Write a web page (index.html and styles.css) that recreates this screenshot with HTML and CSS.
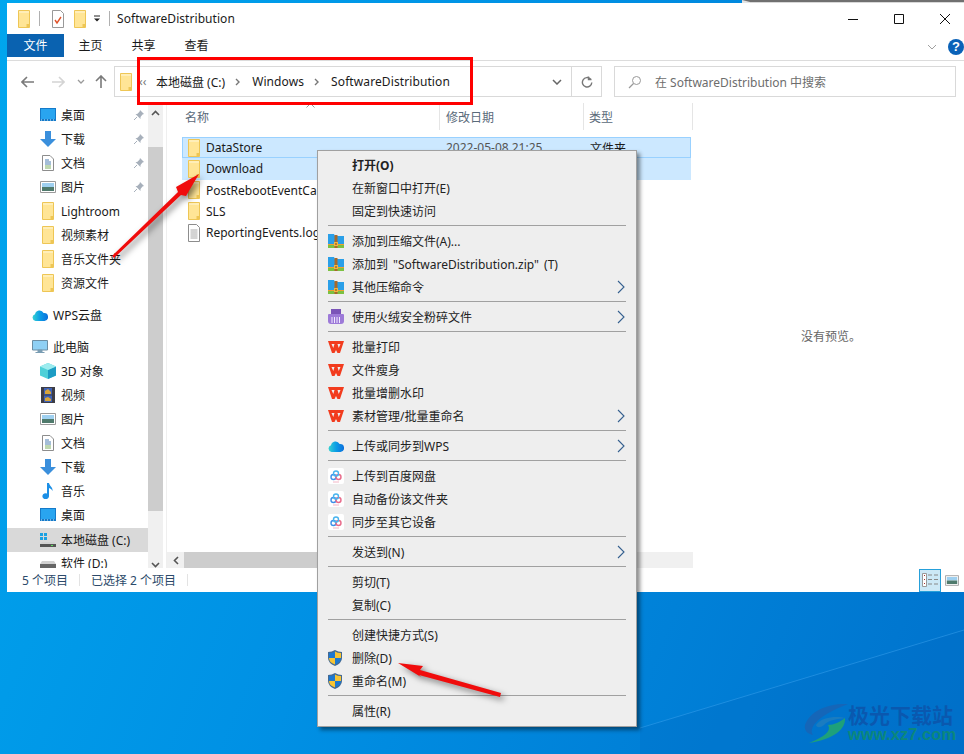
FILE: index.html
```html
<!DOCTYPE html>
<html lang="zh-CN">

<head>
    <meta charset="UTF-8">
    <title>SoftwareDistribution</title>
    <link rel="stylesheet" href="styles.css">
</head>

<body>
    <svg class="defs" width="0" height="0">
        <symbol id="folder" viewBox="0 0 14 18">
            <path d="M1.500 .5H12.500V17.500H1.500Z" fill="#ffe596" stroke="#eec655"/>
            <path d="M9.500 17V14H12V17Z" fill="#eec655"/>
            <path d="M2 1H12V3H2Z" fill="#ffeeb8"/>
        </symbol>
        <symbol id="pin" viewBox="0 0 12 12">
            <path d="M7 1L11 5L9.500 5.500L7.500 8V10L2.500 5H4.200L6.500 2.800Z" fill="#a7b0bb"/>
            <path d="M4 8L1 11" stroke="#a7b0bb"/>
        </symbol>
        <symbol id="desk" viewBox="0 0 16 14">
            <path d="M0 0H16V13H0Z" fill="#157ac9"/>
            <path d="M1 1H15V11H1Z" fill="#29a5f0"/>
            <path d="M1 12H15" stroke="#d6ecfa" stroke-dasharray="1 2"/>
        </symbol>
        <symbol id="down" viewBox="0 0 16 16">
            <path d="M5 0H11V8H16L8 16L0 8H5Z" fill="#3a8fdc"/>
        </symbol>
        <symbol id="doc" viewBox="0 0 12 16">
            <path d="M.5 .5H8L11.500 4V15.500H.5Z" fill="#fff" stroke="#8d8d8d"/>
            <path d="M3 5H7M3 7H9M3 9H9" stroke="#4a7db0"/>
            <path d="M3 11H9M3 13H9" stroke="#7fb061"/>
        </symbol>
        <symbol id="pic" viewBox="0 0 16 12">
            <path d="M.5 .5H15.500V11.500H.5Z" fill="#fff" stroke="#9a9a9a"/>
            <path d="M2 2H14V6H2Z" fill="#9fd0f0"/>
            <path d="M2 6H14V10H2Z" fill="#4f7a6c"/>
        </symbol>
        <symbol id="cloud" viewBox="0 0 16 12">
            <defs>
                <linearGradient id="cloudfill" x1="0" x2="1" y1="0" y2="0">
                    <stop offset="0" stop-color="#35d2d2"/>
                    <stop offset=".5" stop-color="#0a9be6"/>
                    <stop offset="1" stop-color="#0c6fdc"/>
                </linearGradient>
            </defs>
            <path d="M3.500 12A3.500 3.500 0 0 1 3 5.200A4.600 4.600 0 0 1 11.600 4A4 4 0 0 1 12.500 12Z" fill="url(#cloudfill)"/>
        </symbol>
        <symbol id="pc" viewBox="0 0 16 14">
            <path d="M.5 .5H15.500V10H.5Z" fill="#8fd0f4" stroke="#6d8ea3"/>
            <path d="M6 10H10V12H6ZM3.500 12.500H12.500" fill="#7a9db3" stroke="#7a9db3"/>
        </symbol>
        <symbol id="cube" viewBox="0 0 16 16">
            <path d="M8 0L16 3.500V12.500L8 16L0 12.500V3.500Z" fill="#4fd0d8"/>
            <path d="M8 7L16 3.500V12.500L8 16Z" fill="#1c9cc4"/>
            <path d="M8 0L16 3.500L8 7L0 3.500Z" fill="#9decef"/>
        </symbol>
        <symbol id="film" viewBox="0 0 14 16">
            <path d="M0 0H14V16H0Z" fill="#3d3d46"/>
            <path d="M3 1H11V7.500H3Z" fill="#3f62b8"/>
            <path d="M3 8.500H11V15H3Z" fill="#3f62b8"/>
            <path d="M4 4L7 2L10 5V7H4ZM4 11L7 10L10 12V14H4Z" fill="#d9a53a"/>
        </symbol>
        <symbol id="note" viewBox="0 0 12 16">
            <path d="M5 0H7C7.500 3 11 4 10.500 8C9.500 6 8.500 5.500 7 5V13A3.300 3 0 1 1 5 10.500Z" fill="#1c8fe6"/>
        </symbol>
        <symbol id="drivec" viewBox="0 0 16 14">
            <path d="M0 0H3V3H0ZM4 0H7V3H4ZM0 4H3V7H0ZM4 4H7V7H4Z" fill="#1ba1e2"/>
            <path d="M2 9H14L16 11H0Z" fill="#d2d2d2"/>
            <path d="M0 11H16V14H0Z" fill="#555"/>
            <path d="M11 12H13V13H11Z" fill="#5fe05f"/>
        </symbol>
        <symbol id="drive" viewBox="0 0 16 14">
            <path d="M2 5H14L16 8H0Z" fill="#d2d2d2"/>
            <path d="M0 8H16V12H0Z" fill="#666"/>
        </symbol>
        <symbol id="zip" viewBox="0 0 16 16">
            <path d="M0 1H6L7 3H16V12H0Z" fill="#2a9fe8"/>
            <path d="M0 11H16V12H0Z" fill="#f0a030"/>
            <path d="M0 12H16V15H0Z" fill="#7cc142"/>
            <path d="M6.500 2H9.500V15H6.500Z" fill="#a8692a"/>
            <path d="M6 9H10V13H6Z" fill="#f2b544"/>
            <path d="M7.500 10H8.500V12H7.500Z" fill="#7a4a10"/>
        </symbol>
        <symbol id="shred" viewBox="0 0 16 16">
            <path d="M3 0H13V5H3Z" fill="#7a54b8"/>
            <path d="M1 5H15Q16 5 16 6V12Q16 15 13 15H3Q0 15 0 12V6Q0 5 1 5Z" fill="#9d7ad8"/>
            <path d="M4 8V14M6.500 8V14M9 8V14M11.500 8V14" stroke="#f0eaff"/>
        </symbol>
        <symbol id="wps" viewBox="0 0 16 12">
            <path d="M0 0H16L12 12H9.500L8 9L6.500 12H4Z" fill="#f23c1e"/>
            <path d="M3.500 3H6.500L5.300 7ZM9.500 3H12.500L10.700 7Z" fill="#eee"/>
        </symbol>
        <symbol id="baidu" viewBox="0 0 16 16">
            <path d="M2 0H14Q16 0 16 2V14Q16 16 14 16H2Q0 16 0 14V2Q0 0 2 0Z" fill="#fff"/>
            <circle cx="5.500" cy="9" r="2.500" fill="none" stroke="#3d8fe8" stroke-width="1.400"/>
            <circle cx="10.500" cy="9" r="2.500" fill="none" stroke="#e86a8a" stroke-width="1.400"/>
            <circle cx="8" cy="5.500" r="2.500" fill="none" stroke="#49b4ee" stroke-width="1.400"/>
            <path d="M5 14H11" stroke="#f2b6c6"/>
        </symbol>
        <symbol id="shield" viewBox="0 0 14 16">
            <path d="M7 0Q10 2 14 2V8Q14 13 7 16Q0 13 0 8V2Q4 2 7 0Z" fill="#456a92"/>
            <path d="M7 1.500V8H1V3Q4.500 3 7 1.500ZM7 8H13Q13 12.500 7 14.500Z" fill="#1c78d0"/>
            <path d="M7 1.500Q9.500 3 13 3V8H7ZM7 8V14.500Q1 12.500 1 8Z" fill="#f7c433"/>
        </symbol>
        <symbol id="more" viewBox="0 0 8 14">
            <path d="M1 1L7 7L1 13" fill="none" stroke="#35608f" stroke-width="1.100"/>
        </symbol>
        <symbol id="crumb" viewBox="0 0 6 8">
            <path d="M1 1L4 4L1 7" fill="none" stroke="#777" stroke-width="1.400"/>
        </symbol>
    </svg>

    <!-- wallpaper -->
    <svg class="wall" width="964" height="754">
        <path d="M640 728L964 630V754H640Z" fill="#0068c0" opacity=".25"/>
        <path d="M640 728L964 630" stroke="#3aa4f0" opacity=".5" fill="none"/>
    </svg>
    <div class="backwin"></div>

    <div class="window">
        <header class="titlebar">
            <svg width="14" height="18"><use href="#folder"/></svg>
            <span class="tsep"></span>
            <svg class="qdoc" width="14" height="18" viewBox="0 0 14 18">
                <path d="M1.500 .5H9.500L12.500 3.500V17.500H1.500Z" fill="#fff" stroke="#999"/>
                <path d="M4 10L6 13L10 7" fill="none" stroke="#e0532a" stroke-width="1.400"/>
            </svg>
            <svg class="qfold" width="14" height="18"><use href="#folder"/></svg>
            <svg class="qdrop" width="8" height="8" viewBox="0 0 8 8">
                <path d="M1 1H7" stroke="#222"/>
                <path d="M1 3.500H7L4 6.500Z" fill="#222"/>
            </svg>
            <span class="tsep"></span>
            <span class="title">SoftwareDistribution</span>
            <div class="winctl">
                <svg width="12" height="12" viewBox="0 0 12 12"><path d="M1 6.500H11" stroke="#111"/></svg>
                <svg width="12" height="12" viewBox="0 0 12 12"><path d="M1.500 1.500H10.500V10.500H1.500Z" fill="none" stroke="#111"/></svg>
                <svg width="12" height="12" viewBox="0 0 12 12"><path d="M1 1L11 11M11 1L1 11" stroke="#111"/></svg>
            </div>
        </header>

        <div class="ribbon">
            <span class="tab file">文件</span>
            <span class="tab">主页</span>
            <span class="tab">共享</span>
            <span class="tab">查看</span>
            <svg class="ribchev" width="10" height="6" viewBox="0 0 10 6"><path d="M1 1L5 5L9 1" fill="none" stroke="#a0a0a0"/></svg>
            <span class="help">?</span>
        </div>

        <div class="addrrow">
            <div class="navbtns">
                <svg class="nback" width="14" height="12" viewBox="0 0 14 12"><path d="M6 1L1 6L6 11M1 6H13" fill="none" stroke="#7a7a7a" stroke-width="1.600"/></svg>
                <svg class="nfwd" width="14" height="12" viewBox="0 0 14 12"><path d="M8 1L13 6L8 11M13 6H1" fill="none" stroke="#d4d4d4" stroke-width="1.600"/></svg>
                <svg class="nchev" width="8" height="6" viewBox="0 0 8 6"><path d="M1 1L4 4L7 1" fill="none" stroke="#9a9a9a" stroke-width="1.300"/></svg>
                <svg class="nup" width="12" height="14" viewBox="0 0 12 14"><path d="M1 6L6 1L11 6M6 1V13" fill="none" stroke="#7a7a7a" stroke-width="1.600"/></svg>
            </div>
            <div class="addr">
                <svg class="addrfold" width="14" height="18"><use href="#folder"/></svg>
                <span class="dbl">‹‹</span>
                <span>本地磁盘 (C:)</span>
                <svg class="crumb" width="6" height="8"><use href="#crumb"/></svg>
                <span class="wide">Windows</span>
                <svg class="crumb" width="6" height="8"><use href="#crumb"/></svg>
                <span class="wide">SoftwareDistribution</span>
                <svg class="addrdrop" width="10" height="6" viewBox="0 0 10 6"><path d="M1 1L5 5L9 1" fill="none" stroke="#666" stroke-width="1.500"/></svg>
            </div>
            <div class="refresh">
                <svg width="12" height="12" viewBox="0 0 12 12"><path d="M9.500 3A4.700 4.700 0 1 0 10.800 6.500M7.500 .5V3.500H10.500" fill="none" stroke="#777" stroke-width="1.400"/></svg>
            </div>
            <div class="search">
                <svg width="14" height="14" viewBox="0 0 14 14"><circle cx="8.500" cy="5.500" r="4" fill="none" stroke="#999"/><path d="M5.500 8.500L1 13" stroke="#999" stroke-width="1.200"/></svg>
                <span>在 SoftwareDistribution 中搜索</span>
            </div>
        </div>

        <div class="main">
            <nav class="nav">
                <div class="nrow q"><svg class="nic" width="16" height="14"><use href="#desk"/></svg><span>桌面</span><svg class="pin" width="12" height="12"><use href="#pin"/></svg></div>
                <div class="nrow q"><svg class="nic" width="16" height="16"><use href="#down"/></svg><span>下载</span><svg class="pin" width="12" height="12"><use href="#pin"/></svg></div>
                <div class="nrow q"><svg class="nic" width="16" height="16"><use href="#doc"/></svg><span>文档</span><svg class="pin" width="12" height="12"><use href="#pin"/></svg></div>
                <div class="nrow q"><svg class="nic" width="16" height="12"><use href="#pic"/></svg><span>图片</span><svg class="pin" width="12" height="12"><use href="#pin"/></svg></div>
                <div class="nrow q"><svg class="nic" width="14" height="18"><use href="#folder"/></svg><span>Lightroom</span></div>
                <div class="nrow q"><svg class="nic" width="14" height="18"><use href="#folder"/></svg><span>视频素材</span></div>
                <div class="nrow q"><svg class="nic" width="14" height="18"><use href="#folder"/></svg><span>音乐文件夹</span></div>
                <div class="nrow q"><svg class="nic" width="14" height="18"><use href="#folder"/></svg><span>资源文件</span></div>
                <div class="nrow top gap"><svg class="nic" width="16" height="12"><use href="#cloud"/></svg><span>WPS云盘</span></div>
                <div class="nrow top gap"><svg class="nic" width="16" height="14"><use href="#pc"/></svg><span>此电脑</span></div>
                <div class="nrow q"><svg class="nic" width="16" height="16"><use href="#cube"/></svg><span>3D 对象</span></div>
                <div class="nrow q"><svg class="nic" width="14" height="16"><use href="#film"/></svg><span>视频</span></div>
                <div class="nrow q"><svg class="nic" width="16" height="12"><use href="#pic"/></svg><span>图片</span></div>
                <div class="nrow q"><svg class="nic" width="16" height="16"><use href="#doc"/></svg><span>文档</span></div>
                <div class="nrow q"><svg class="nic" width="16" height="16"><use href="#down"/></svg><span>下载</span></div>
                <div class="nrow q"><svg class="nic" width="12" height="16"><use href="#note"/></svg><span>音乐</span></div>
                <div class="nrow q"><svg class="nic" width="16" height="14"><use href="#desk"/></svg><span>桌面</span></div>
                <div class="nrow q sel"><svg class="nic" width="16" height="14"><use href="#drivec"/></svg><span>本地磁盘 (C:)</span></div>
                <div class="nrow q"><svg class="nic" width="16" height="14"><use href="#drive"/></svg><span>软件 (D:)</span></div>
            </nav>

            <div class="vbar">
                <svg class="sarrow" width="9" height="6" viewBox="0 0 9 6"><path d="M1 5L4.500 1.500L8 5" fill="none" stroke="#555" stroke-width="1.600"/></svg>
                <div class="vthumb"></div>
                <svg class="sarrow" width="9" height="6" viewBox="0 0 9 6"><path d="M1 1L4.500 4.500L8 1" fill="none" stroke="#555" stroke-width="1.600"/></svg>
            </div>

            <section class="files">
                <div class="cols">
                    <span class="col cname">名称</span>
                    <span class="col cdate">修改日期</span>
                    <span class="col ctype">类型</span>
                    <svg class="sortcaret" width="9" height="5" viewBox="0 0 9 5"><path d="M.5 4.500L4.500 .5L8.500 4.500" fill="none" stroke="#999"/></svg>
                </div>
                <div class="list">
                    <div class="frow picked first"><svg width="14" height="18"><use href="#folder"/></svg><span class="fname">DataStore</span><span class="fdate">2022-05-08 21:25</span><span>文件夹</span></div>
                    <div class="frow picked"><svg width="14" height="18"><use href="#folder"/></svg><span class="fname">Download</span></div>
                    <div class="frow"><svg width="14" height="18"><use href="#folder"/></svg><span class="fname">PostRebootEventCache.V2</span></div>
                    <div class="frow"><svg width="14" height="18"><use href="#folder"/></svg><span class="fname">SLS</span></div>
                    <div class="frow"><svg width="14" height="18" viewBox="0 0 14 18"><path d="M1.500 .5H9.500L12.500 3.500V17.500H1.500Z" fill="#fff" stroke="#8d8d8d"/><path d="M3.500 6H10.500M3.500 8H10.500M3.500 10H10.500M3.500 12H10.500M3.500 14H10.500" stroke="#a8a8a8"/></svg><span class="fname">ReportingEvents.log</span></div>
                </div>
                <div class="hbar">
                    <svg class="harrow" width="6" height="9" viewBox="0 0 6 9"><path d="M5 1L1.500 4.500L5 8" fill="none" stroke="#555" stroke-width="1.600"/></svg>
                    <div class="hthumb"></div>
                </div>
            </section>

            <aside class="preview">没有预览。</aside>
        </div>

        <footer class="status">
            <span>5 个项目</span>
            <i></i>
            <span>已选择 2 个项目</span>
            <i></i>
            <div class="views">
                <span class="vbtn on">
                    <svg width="16" height="14" viewBox="0 0 16 14">
                        <path d="M.5 .5H4.500V13.500H.5Z" fill="#fff" stroke="#999"/>
                        <path d="M2 2H3V3H2ZM2 6H3V7H2ZM2 10H3V11H2Z" fill="#a33"/>
                        <path d="M6 2H10M12 2H16M6 6.500H10M12 6.500H16M6 11H10M12 11H16" stroke="#888"/>
                    </svg>
                </span>
                <span class="vbtn">
                    <svg width="14" height="11"><use href="#pic"/></svg>
                </span>
            </div>
        </footer>
    </div>

    <!-- context menu -->
    <div class="menu">
        <div class="mi bold">打开(O)</div>
        <div class="mi">在新窗口中打开(E)</div>
        <div class="mi">固定到快速访问</div>
        <hr>
        <div class="mi"><svg class="mic" width="16" height="16"><use href="#zip"/></svg>添加到压缩文件(A)...</div>
        <div class="mi zipname"><svg class="mic" width="16" height="16"><use href="#zip"/></svg>添加到 "SoftwareDistribution.zip" (T)</div>
        <div class="mi"><svg class="mic" width="16" height="16"><use href="#zip"/></svg>其他压缩命令<svg class="sub" width="8" height="14"><use href="#more"/></svg></div>
        <hr>
        <div class="mi"><svg class="mic" width="16" height="16"><use href="#shred"/></svg>使用火绒安全粉碎文件<svg class="sub" width="8" height="14"><use href="#more"/></svg></div>
        <hr>
        <div class="mi"><svg class="mic" width="16" height="12"><use href="#wps"/></svg>批量打印</div>
        <div class="mi"><svg class="mic" width="16" height="12"><use href="#wps"/></svg>文件瘦身</div>
        <div class="mi"><svg class="mic" width="16" height="12"><use href="#wps"/></svg>批量增删水印</div>
        <div class="mi"><svg class="mic" width="16" height="12"><use href="#wps"/></svg>素材管理/批量重命名<svg class="sub" width="8" height="14"><use href="#more"/></svg></div>
        <hr>
        <div class="mi"><svg class="mic" width="16" height="12"><use href="#cloud"/></svg>上传或同步到WPS<svg class="sub" width="8" height="14"><use href="#more"/></svg></div>
        <hr>
        <div class="mi"><svg class="mic" width="16" height="16"><use href="#baidu"/></svg>上传到百度网盘</div>
        <div class="mi"><svg class="mic" width="16" height="16"><use href="#baidu"/></svg>自动备份该文件夹</div>
        <div class="mi"><svg class="mic" width="16" height="16"><use href="#baidu"/></svg>同步至其它设备</div>
        <hr>
        <div class="mi">发送到(N)<svg class="sub" width="8" height="14"><use href="#more"/></svg></div>
        <hr>
        <div class="mi">剪切(T)</div>
        <div class="mi">复制(C)</div>
        <hr>
        <div class="mi">创建快捷方式(S)</div>
        <div class="mi"><svg class="mic" width="14" height="16"><use href="#shield"/></svg>删除(D)</div>
        <div class="mi"><svg class="mic" width="14" height="16"><use href="#shield"/></svg>重命名(M)</div>
        <hr>
        <div class="mi">属性(R)</div>
    </div>

    <!-- annotations on top of the shot -->
    <div class="redbox"></div>
    <svg class="arrows" width="964" height="754">
        <path d="M112 256L178 192L176 187L199 174L186 196L181 195L114 258Z" fill="#f00c0c"/>
        <path d="M398 663L423 666L420 670L501 693L500 697L419 675L421 677Z" fill="#f00c0c"/>
    </svg>

    <!-- watermark -->
    <div class="mark">
        <svg width="44" height="42" viewBox="0 0 44 42">
            <path d="M44 1C24 0 6 8 1 22C0 28 4 31 9 32C5 26 10 14 44 1Z" fill="#1566b8"/>
            <path d="M12 22C18 13 34 13 42 15C34 16 24 17 20 22C16 25 13 25 12 22Z" fill="#1a7cc0"/>
            <path d="M41 15C42 26 30 36 5 40C20 34 28 28 24 22C30 22 36 19 41 15Z" fill="#1ea07a"/>
        </svg>
        <div class="marktxt">
            <b>极光下载站</b>
            <b class="url">www.xz7.com</b>
        </div>
    </div>
</body>

</html>
```

FILE: styles.css
```css
* {
    box-sizing: border-box;
}

html,
body {
    margin: 0;
    height: 754px;
    overflow: hidden;
}

body {
    position: relative;
    padding: 3px 0 0 7px;
    background: linear-gradient(112deg, #00a6ee 0%, #0090e4 45%, #0072cc 100%);
    font-family: "Noto Sans", "Noto Sans CJK SC", sans-serif;
    font-size: 12px;
    color: #1a1a1a;
}

svg {
    display: block;
    flex: none;
}

.defs {
    position: absolute;
}

.wall {
    position: absolute;
    left: 0;
    top: 0;
}

.backwin {
    position: absolute;
    top: 0;
    right: 0;
    left: 742px;
    height: 3px;
    background: #d8d8d8;
    border-left: 8px solid #e4e4e4;
    border-top: 2px solid #707070;
}

.window {
    position: relative;
    display: flex;
    flex-direction: column;
    height: 589px;
    background: #fff;
}

/* title bar */
.titlebar {
    display: flex;
    align-items: center;
    height: 31px;
    padding-left: 10px;
}

.tsep {
    width: 1px;
    height: 15px;
    margin-left: 8px;
    background: #b0b0b0;
}

.qdoc {
    margin-left: 11px;
}

.qfold {
    margin-left: 8px;
}

.qdrop {
    margin-left: 6px;
}

.title {
    margin-left: 7px;
    letter-spacing: .05px;
}

.winctl {
    display: flex;
    gap: 34px;
    margin-left: auto;
    margin-right: 13px;
}

/* ribbon tabs */
.ribbon {
    display: flex;
    align-items: flex-start;
    height: 27px;
    border-bottom: 1px solid #dcdcdc;
}

.tab {
    width: 53px;
    height: 23px;
    line-height: 23px;
    text-align: center;
}

.tab.file {
    width: 57px;
    background: #0a62b0;
    color: #fff;
}

.ribchev {
    margin: 10px 0 0 auto;
}

.help {
    width: 16px;
    height: 16px;
    margin: 5px 0 0 11px;
    border-radius: 50%;
    background: #0a62b8;
    color: #fff;
    font: bold 13px/16px "Liberation Sans", sans-serif;
    text-align: center;
}

/* address row */
.addrrow {
    display: flex;
    align-items: flex-start;
    height: 42px;
    padding-top: 5px;
}

.navbtns {
    display: flex;
    align-items: center;
    width: 107px;
    height: 31px;
    padding-left: 14px;
}

.nfwd {
    margin-left: 16px;
}

.nchev {
    margin-left: 12px;
}

.nup {
    margin-left: 10px;
}

.addr,
.refresh,
.search {
    display: flex;
    align-items: center;
    height: 31px;
    border: 1px solid #d9d9d9;
}

.addr {
    width: 457px;
    padding-left: 4px;
    border-right: 0;
}

.addrfold {
    margin-right: 6px;
}

.dbl {
    width: 17px;
    color: #777;
}

.wide {
    letter-spacing: .1px;
}

.crumb {
    margin: 0 11px 0 10px;
}

.addrdrop {
    margin-left: auto;
    margin-right: 9px;
}

.refresh {
    justify-content: center;
    width: 31px;
}

.search {
    gap: 13px;
    width: 342px;
    margin-left: 12px;
    padding-left: 13px;
    color: #6d6d6d;
}

/* main panes */
.main {
    display: flex;
    flex: 1;
    min-height: 0;
    overflow: hidden;
}

.nav {
    width: 141px;
    height: 100%;
    overflow: hidden;
}

.nrow {
    display: flex;
    align-items: center;
    height: 24px;
}

.nrow.q {
    padding-left: 33px;
}

.nrow.top {
    padding-left: 25px;
}

.nrow.gap {
    margin-top: 8px;
}

.nic {
    margin-right: 5px;
}

.nrow.q .nic {
    width: 16px;
}

.nrow.sel {
    margin-top: 1px;
    margin-bottom: -1px;
    background: #d9d9d9;
}

.pin {
    margin-left: auto;
    margin-right: 3px;
}

.vbar {
    display: flex;
    flex-direction: column;
    align-items: center;
    width: 15px;
    background: #f0f0f0;
}

.sarrow {
    margin-top: 7px;
}

.vthumb {
    width: 15px;
    height: 366px;
    margin: 31px 0 44px;
    background: #cdcdcd;
}

.files {
    display: flex;
    flex-direction: column;
    width: 527px;
    margin-left: 3px;
    border-left: 1px solid #efefef;
}

.cols {
    position: relative;
    display: grid;
    grid-template-columns: 273px 144px 109px;
    flex: none;
    height: 27px;
    color: #5a6a7a;
}

.col {
    padding: 5px 0 0 6px;
    border-right: 1px solid #e5e5e5;
}

.cname {
    padding-left: 18px;
}

.ctype {
    padding-left: 5px;
}

.sortcaret {
    position: absolute;
    left: 139px;
    top: 0;
}

.list {
    flex: 1;
    padding: 7px 2px 0 15px;
}

.frow {
    display: flex;
    align-items: center;
    height: 21.250px;
    padding-left: 5px;
}

.frow.picked {
    background: #cce8ff;
}

.frow.first {
    outline: 1px solid #99d1ff;
    outline-offset: -1px;
}

.fname {
    width: 240px;
    margin-left: 5px;
    white-space: nowrap;
}

.fdate {
    width: 144px;
    color: #555;
}

.hbar {
    display: flex;
    align-items: center;
    flex: none;
    height: 16px;
    background: #f0f0f0;
}

.harrow {
    margin-left: 6px;
}

.hthumb {
    width: 330px;
    height: 16px;
    margin-left: 5px;
    background: #cdcdcd;
}

.preview {
    flex: 1;
    padding: 224px 0 0 108px;
    color: #666;
}

/* status bar */
.status {
    display: flex;
    align-items: center;
    gap: 11px;
    height: 24px;
    padding-left: 15px;
    color: #2c4a6a;
}

.status i {
    width: 1px;
    height: 12px;
    background: #e3e3e3;
}

.views {
    display: flex;
    align-items: center;
    margin-left: auto;
    margin-right: 1px;
}

.vbtn {
    display: flex;
    align-items: center;
    justify-content: center;
    width: 22px;
    height: 23px;
}

.vbtn.on {
    background: #cce8f6;
    border: 1px solid #26a0da;
}

/* context menu */
.menu {
    position: absolute;
    left: 317px;
    top: 150px;
    width: 320px;
    height: 577px;
    padding: 2px 10px 0;
    background: #eee;
    border: 1px solid #a0a0a0;
    box-shadow: 3px 3px 4px rgba(0, 0, 0, .45);
    color: #222;
}

.mi {
    position: relative;
    display: flex;
    align-items: center;
    height: 23px;
    padding-left: 24px;
}

.mi.zipname {
    word-spacing: 2px;
}

.mic {
    position: absolute;
    left: 0;
    top: 50%;
    transform: translateY(-50%);
}

.mi.bold {
    font-weight: 700;
}

.menu hr {
    height: 1px;
    margin: 3px 0;
    border: 0;
    background: #a0a0a0;
}

.sub {
    margin-left: auto;
    margin-right: 1px;
}

/* annotations */
.redbox {
    position: absolute;
    left: 137px;
    top: 57px;
    width: 336px;
    height: 48px;
    border: 3px solid #f00;
}

.arrows {
    position: absolute;
    left: 0;
    top: 0;
    filter: drop-shadow(3px 3px 3px rgba(0, 0, 0, .5));
}

/* watermark */
.mark {
    position: absolute;
    left: 804px;
    top: 703px;
    display: flex;
}

.marktxt {
    display: flex;
    flex-direction: column;
    font-family: "Noto Sans CJK SC", sans-serif;
    color: rgba(12, 84, 170, .85);
    font-size: 21px;
    line-height: 22px;
}

.url {
    color: rgba(14, 140, 110, .85);
    font: bold 16.600px/20px "Liberation Sans", sans-serif;
    white-space: nowrap;
}
```
